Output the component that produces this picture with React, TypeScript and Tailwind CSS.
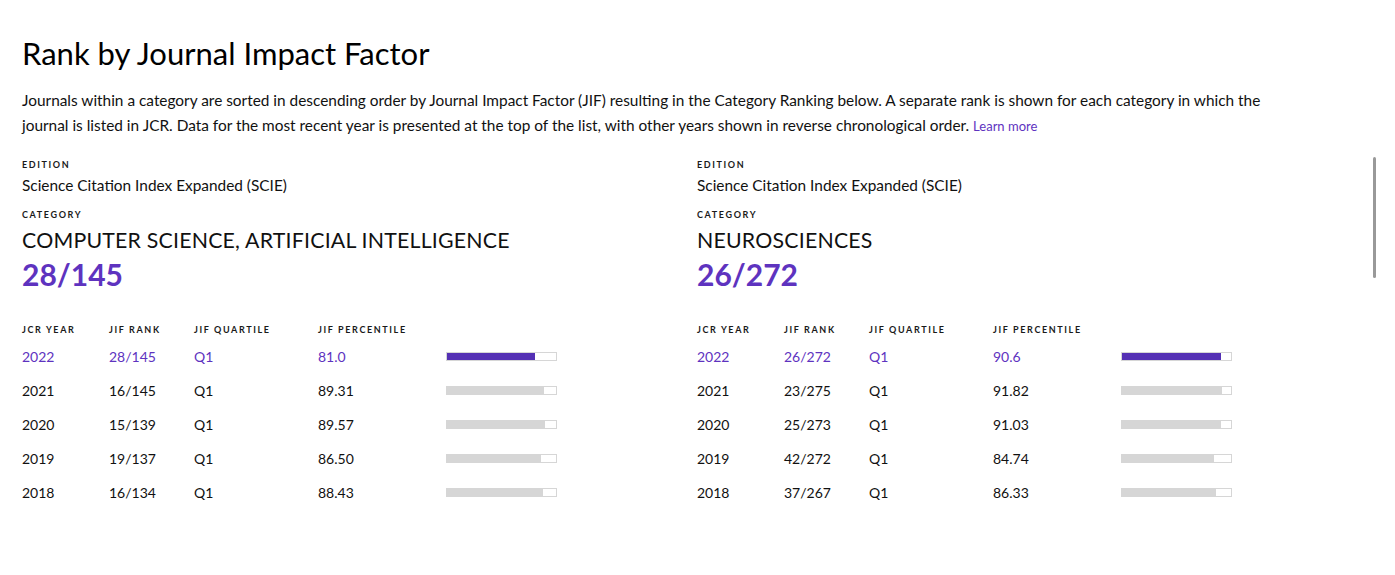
const purple = "text-[#5e33bf]";

type Row = { year: string; rank: string; quartile: string; pct: string; value: number };

type Panel = { edition: string; category: string; rank: string; rows: Row[] };

const panels: Panel[] = [
  {
    edition: "Science Citation Index Expanded (SCIE)",
    category: "COMPUTER SCIENCE, ARTIFICIAL INTELLIGENCE",
    rank: "28/145",
    rows: [
      { year: "2022", rank: "28/145", quartile: "Q1", pct: "81.0", value: 81.0 },
      { year: "2021", rank: "16/145", quartile: "Q1", pct: "89.31", value: 89.31 },
      { year: "2020", rank: "15/139", quartile: "Q1", pct: "89.57", value: 89.57 },
      { year: "2019", rank: "19/137", quartile: "Q1", pct: "86.50", value: 86.5 },
      { year: "2018", rank: "16/134", quartile: "Q1", pct: "88.43", value: 88.43 },
    ],
  },
  {
    edition: "Science Citation Index Expanded (SCIE)",
    category: "NEUROSCIENCES",
    rank: "26/272",
    rows: [
      { year: "2022", rank: "26/272", quartile: "Q1", pct: "90.6", value: 90.6 },
      { year: "2021", rank: "23/275", quartile: "Q1", pct: "91.82", value: 91.82 },
      { year: "2020", rank: "25/273", quartile: "Q1", pct: "91.03", value: 91.03 },
      { year: "2019", rank: "42/272", quartile: "Q1", pct: "84.74", value: 84.74 },
      { year: "2018", rank: "37/267", quartile: "Q1", pct: "86.33", value: 86.33 },
    ],
  },
];

function Label({ children }: { children: React.ReactNode }) {
  return (
    <div className="text-[9px] font-bold uppercase tracking-[0.18em] leading-[12px] text-[#1a1a1a]">
      {children}
    </div>
  );
}

function RankPanel({ panel }: { panel: Panel }) {
  return (
    <div className="flex flex-col">
      <Label>Edition</Label>
      <div className="mt-[4px] text-[15.4px] leading-[20px]">{panel.edition}</div>
      <div className="mt-[14px]">
        <Label>Category</Label>
      </div>
      <div className="mt-[5px] text-[21.3px] leading-[28px] tracking-[0.01em]">{panel.category}</div>
      <div className={`mt-[1px] text-[30px] font-bold leading-[38px] ${purple}`}>{panel.rank}</div>

      <div className="mt-[31px] grid grid-cols-[87px_85px_124px_128px_111px] items-center">
        <Label>JCR Year</Label>
        <Label>JIF Rank</Label>
        <Label>JIF Quartile</Label>
        <Label>JIF Percentile</Label>
        <div />
        {panel.rows.map((r, i) => {
          const hi = i === 0;
          const top = hi ? "mt-[3px]" : "";
          const cls = `h-[34px] flex items-center text-[14px] ${top} ${hi ? purple : "text-[#111]"}`;
          return (
            <div key={r.year} className="contents">
              <div className={cls}>{r.year}</div>
              <div className={cls}>{r.rank}</div>
              <div className={cls}>{r.quartile}</div>
              <div className={cls}>{r.pct}</div>
              <div className={`h-[34px] flex items-center ${top}`}>
                <div className="h-[9px] w-[111px] border border-[#d6d6d6] bg-white">
                  <div
                    className={`h-full ${hi ? "bg-[#5430b4]" : "bg-[#d6d6d6]"}`}
                    style={{ width: `${r.value}%` }}
                  />
                </div>
              </div>
            </div>
          );
        })}
      </div>
    </div>
  );
}

export default function App() {
  return (
    <div className="relative min-h-[575px] bg-white px-[22px] pt-[33px] font-['Lato',sans-serif] text-[#111]">
      <h1 className="text-[31px] leading-[40px] text-black">Rank by Journal Impact Factor</h1>
      <p className="mt-[15px] max-w-[1268px] text-[15.4px] leading-[25px]">
        Journals within a category are sorted in descending order by Journal Impact Factor (JIF) resulting in the
        Category Ranking below. A separate rank is shown for each category in which the journal is listed in JCR. Data
        for the most recent year is presented at the top of the list, with other years shown in reverse chronological
        order. <a className={`inline-block text-[13px] leading-[18px] ${purple}`}>Learn more</a>
      </p>
      <div className="mt-[21px] grid w-[1350px] grid-cols-2">
        {panels.map((p) => (
          <RankPanel key={p.category} panel={p} />
        ))}
      </div>
      <div className="absolute right-[19px] top-[157px] h-[121px] w-[3px] rounded-full bg-[#999]" />
    </div>
  );
}
